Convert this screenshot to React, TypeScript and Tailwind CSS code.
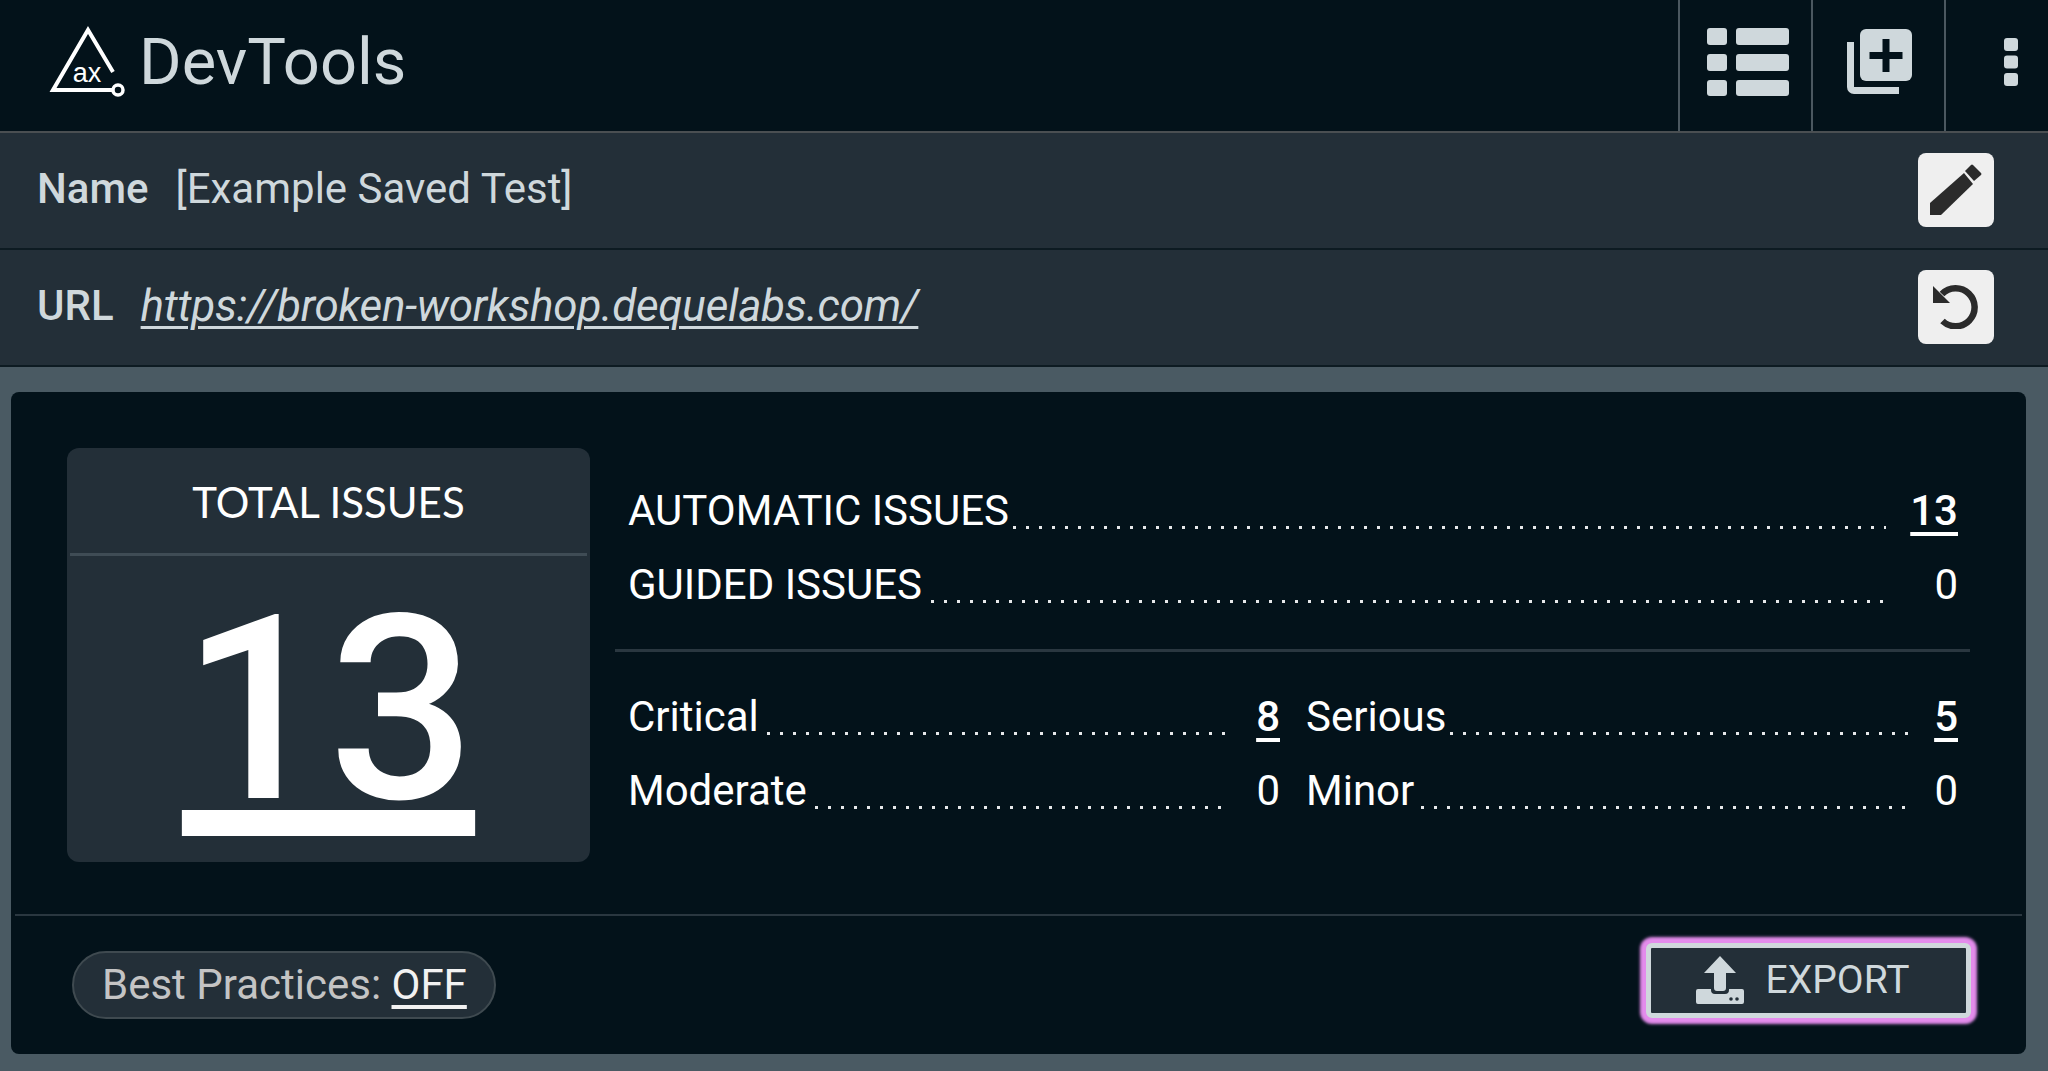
const roboto = { fontFamily: "Roboto, sans-serif" };

function Logo() {
  return (
    <svg width="78" height="76" viewBox="0 0 78 76" fill="none" className="shrink-0">
      <path d="M66 48 L41 6 L6 66 H66" stroke="#fff" strokeWidth="4" />
      <circle cx="71" cy="66" r="5" stroke="#fff" strokeWidth="3.500" />
      <text x="40" y="58" textAnchor="middle" fill="#fff" fontSize="27" fontFamily="Liberation Sans, sans-serif">ax</text>
    </svg>
  );
}

function ListIcon() {
  return (
    <svg width="82" height="68" viewBox="0 0 82 68" fill="#cfd8dc">
      <rect x="0" y="0" width="20" height="17" rx="3" />
      <rect x="29" y="0" width="53" height="17" rx="3" />
      <rect x="0" y="26" width="20" height="17" rx="3" />
      <rect x="29" y="26" width="53" height="17" rx="3" />
      <rect x="0" y="52" width="20" height="16" rx="3" />
      <rect x="29" y="52" width="53" height="16" rx="3" />
    </svg>
  );
}

function CopyPlusIcon() {
  return (
    <svg width="65" height="65" viewBox="0 0 65 65">
      <path d="M0 13 H7 V58 H52 V65 H7 A7 7 0 0 1 0 58 Z" fill="#cfd8dc" />
      <rect x="13" y="0" width="52" height="52" rx="6" fill="#cfd8dc" />
      <rect x="35.500" y="10" width="7" height="33" fill="#03121a" />
      <rect x="22.500" y="23" width="33" height="7" fill="#03121a" />
    </svg>
  );
}

function DotsIcon() {
  return (
    <svg width="14" height="48" viewBox="0 0 14 48" fill="#cfd8dc">
      <rect y="0" width="14" height="13" rx="3" />
      <rect y="17.500" width="14" height="13" rx="3" />
      <rect y="35" width="14" height="13" rx="3" />
    </svg>
  );
}

function PencilIcon() {
  return (
    <svg width="52" height="52" viewBox="0 0 52 52" fill="#2b2b2b">
      <path d="M0 39 L34 9 L43 20 L11 51 H0 Z" />
      <path d="M35 7 L41 1 Q42 0 43 1 L51 9 Q52 10 51 11 L44 17 Z" />
    </svg>
  );
}

function UndoIcon() {
  return (
    <svg width="46" height="44" viewBox="0 0 46 44" fill="none">
      <path d="M9 9 A19 19 0 1 1 9.500 36" stroke="#2b2b2b" strokeWidth="6.500" />
      <path d="M0 1 L17 18 H0 Z" fill="#2b2b2b" />
    </svg>
  );
}

function ExportIcon() {
  return (
    <svg width="48" height="48" viewBox="0 0 48 48" fill="#cfd8dc">
      <path d="M24 0 L40 17 H30 V32 Q30 35 27 35 H21 Q18 35 18 32 V17 H8 Z" />
      <path d="M2 33 H15 V34 Q15 38 19 38 H29 Q33 38 33 34 V33 H46 Q48 33 48 35 V46 Q48 48 46 48 H2 Q0 48 0 46 V35 Q0 33 2 33 Z" />
      <circle cx="35" cy="43" r="1.800" fill="#232f38" />
      <circle cx="41" cy="43" r="1.800" fill="#232f38" />
    </svg>
  );
}

function HeaderButton({ className, children }: { className: string; children: React.ReactNode }) {
  return (
    <button className={`flex h-full items-center justify-center border-l-2 border-[#4b5860] pb-[8px] ${className}`}>
      {children}
    </button>
  );
}

function InfoRow({ label, children, icon }: { label: string; children: React.ReactNode; icon: React.ReactNode }) {
  return (
    <div className="flex h-[117px] items-center border-b-2 border-[#0d1b22] bg-[#232f38] pb-[1px] pl-[37px] pr-[54px]">
      <span className="mb-[2px] font-medium">{label}</span>
      {children}
      <button className="ml-auto flex h-[74px] w-[76px] items-center justify-center rounded-[8px] bg-[#efefef]">
        {icon}
      </button>
    </div>
  );
}

function Leader({ label, value, link, dots, valueWidth }: { label: string; value: string; link?: boolean; dots: string; valueWidth: string }) {
  return (
    <div className="flex h-[74px] min-w-0 items-center text-white">
      <span className="shrink-0">{label}</span>
      <span className={`mt-[33px] h-[3px] flex-1 bg-[linear-gradient(to_right,#e6e8ea_3px,transparent_3px)] bg-[length:13px_3px] bg-repeat-x ${dots}`} />
      <span className={`shrink-0 text-right ${valueWidth}`}>
        <a className={link ? "font-medium underline decoration-[4px] underline-offset-[7px]" : ""}>{value}</a>
      </span>
    </div>
  );
}

export default function App() {
  return (
    <div className="h-[1071px] w-[2048px] overflow-hidden bg-[#4a5a63] text-[42px] leading-none text-[#cfd8dc]" style={roboto}>
      <header className="flex h-[133px] items-center border-b-2 border-[#4a4f52] bg-[#03121a]">
        <div className="ml-[47px] flex items-center gap-[14px] pb-[7px]">
          <Logo />
          <span className="text-[65px]">DevTools</span>
        </div>
        <div className="ml-auto flex h-full">
          <HeaderButton className="w-[133px] pl-[5px]"><ListIcon /></HeaderButton>
          <HeaderButton className="w-[133px] pl-[2px]"><CopyPlusIcon /></HeaderButton>
          <HeaderButton className="w-[104px] pl-[28px]"><DotsIcon /></HeaderButton>
        </div>
      </header>

      <InfoRow label="Name" icon={<PencilIcon />}>
        <span className="mb-[2px] ml-[27px]">[Example Saved Test]</span>
      </InfoRow>
      <InfoRow label="URL" icon={<UndoIcon />}>
        <a className="mb-[2px] ml-[27px] text-[44px] italic tracking-[-0.25px] underline decoration-[3px] underline-offset-[5px]">https://broken-workshop.dequelabs.com/</a>
      </InfoRow>

      <main className="mx-[11px] mt-[25px] flex h-[662px] w-[2015px] flex-col rounded-[8px] bg-[#03121a]">
        <div className="flex flex-1 items-start px-[56px] pt-[56px]">
          <section className="flex h-[414px] w-[523px] shrink-0 flex-col items-center rounded-[12px] bg-[#232f38] px-[3px] text-white">
            <div className="flex h-[108px] w-full items-center justify-center border-b-[3px] border-[#3f4c55] pt-[2px] text-[42px]" style={{ fontFamily: "Lato, sans-serif" }}>TOTAL ISSUES</div>
            <a className="mt-[25px] text-[258px] font-medium underline decoration-[26px] underline-offset-[12px]">13</a>
          </section>
          <section className="ml-[25px] flex-1">
            <div className="pl-[13px] pr-[12px] pt-[26px]">
              <Leader label="AUTOMATIC ISSUES" value="13" link dots="ml-[4px]" valueWidth="w-[72px]" />
              <Leader label="GUIDED ISSUES" value="0" dots="ml-[9px]" valueWidth="w-[72px]" />
            </div>
            <div className="mt-[27px] h-[3px] bg-[#2a3740]" />
            <div className="grid grid-cols-2 gap-x-[26px] pl-[13px] pr-[12px] pt-[28px]">
              <Leader label="Critical" value="8" link dots="ml-[8px]" valueWidth="w-[54px]" />
              <Leader label="Serious" value="5" link dots="ml-[4px]" valueWidth="w-[47px]" />
              <Leader label="Moderate" value="0" dots="ml-[8px]" valueWidth="w-[54px]" />
              <Leader label="Minor" value="0" dots="ml-[7px]" valueWidth="w-[47px]" />
            </div>
          </section>
        </div>
        <footer className="mx-[4px] flex h-[140px] items-center justify-between border-t-2 border-[#2a3740] pl-[57px] pr-[51px]">
          <div className="flex h-[68px] items-center rounded-full border-2 border-[#3f4a50] bg-[#232f38] pl-[28px] pr-[27px] text-[#c4c4c4]">
            Best Practices:&nbsp;<a className="text-[#f2f2f2] underline decoration-[4px] underline-offset-[6px]">OFF</a>
          </div>
          <button className="mb-[10px] flex h-[75px] w-[325px] items-center justify-center gap-[22px] rounded-[6px] border-[5px] border-[#cfd8dc] bg-[#232f38] pr-[12px] text-[39px] shadow-[0_0_3px_6px_#e38cec]">
            <ExportIcon />
            EXPORT
          </button>
        </footer>
      </main>
    </div>
  );
}
